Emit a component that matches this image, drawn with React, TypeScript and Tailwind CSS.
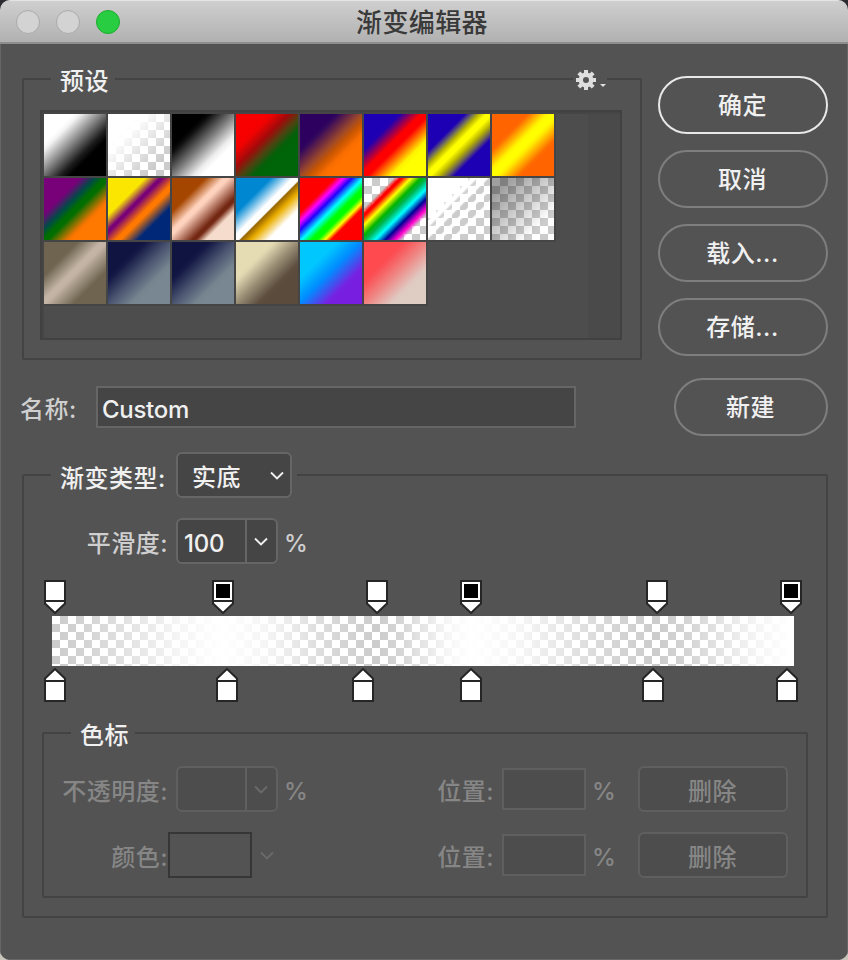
import type { ReactNode } from "react"
import clsx from "clsx"

const CHECKER = "bg-[conic-gradient(#fff_25%,#ccc_0_50%,#fff_0_75%,#ccc_0)] bg-[length:16px_16px] bg-[position:8px_0]"

const PRESETS = [
  "bg-[linear-gradient(135deg,#fff_24%,#f2f2f2_29%,#888_46%,#1c1c1c_63%,#000_71%)]",
  "bg-[linear-gradient(135deg,#fff_26%,#fffffff0_32%,#fff8_52%,#fff2_72%,#fff0_82%)]",
  "bg-[linear-gradient(135deg,#000_26%,#0c0c0c_31%,#777_49%,#ededed_67%,#fff_74%)]",
  "bg-[linear-gradient(135deg,#f80000_25%,#ee0202_30%,#a00a0a_43%,#4a4510_54%,#04600a_63%,#006408_68%)]",
  "bg-[linear-gradient(135deg,#2d005f_27%,#34085c_31%,#a04a28_50%,#c85500_57%,#fa6e00_67%,#ff7200_72%)]",
  "bg-[linear-gradient(135deg,#1e00b4_27%,#2a00a8_30%,#f00_46%,#f00_53%,#fff000_71%,#ff0_76%)]",
  "bg-[linear-gradient(135deg,#1e00b4_30%,#777755_37%,#b9b400_41%,#ff0_47%,#ff0_52%,#b9b400_59%,#6e6455_65%,#1e00b4_71%)]",
  "bg-[linear-gradient(135deg,#ff6400_27%,#ff6c00_30%,#fff400_44%,#ff0_48%,#ff0_52%,#fff000_56%,#ff6c00_71%,#ff6400_75%)]",
  "bg-[linear-gradient(135deg,#780078_28%,#700678_30%,#004b46_41%,#006e00_49%,#006e00_53%,#f47400_69%,#ff7800_72%)]",
  "bg-[linear-gradient(135deg,#fae600_30%,#780078_42%,#780078_44%,#ff7800_56%,#ff7800_60%,#002878_74%)]",
  "bg-[linear-gradient(135deg,#a54600_27%,#ffd2be_42%,#ffd2be_46%,#732814_66%,#732814_69%,#f5dccc_77%)]",
  "bg-[linear-gradient(135deg,#0087d2_28%,#fff_46%,#fff_52%,#966400_53.5%,#ebaf00_62%,#fff_76%)]",
  "bg-[linear-gradient(135deg,#f00_28%,#f0f_35%,#20f_42%,#0ff_51%,#0f0_59%,#0f0_64%,#ff0_70%,#f00_75%)]",
  "bg-[linear-gradient(135deg,#f000_24%,#f00_29%,#f00_31%,#ff0_38%,#00b400_46%,#00b450_51%,#0ff_59%,#009_67%,#f0c_75%,#f0c0_81%)]",
  "bg-[linear-gradient(135deg,#fff_32%,#fff6_33%_34%,#fff_35%_39%,#fff2_41%_43%,#fff_45%_48%,#fff0_50%_55%,#fff_57%_59%,#fff0_61%_67%,#fff_69%_70%,#fff0_72%)]",
  "bg-[linear-gradient(135deg,#00000060_15%,#0003_45%,#0000_78%)]",
  "bg-[linear-gradient(135deg,#6e6450_27%,#c3b4a5_46%,#c3b4a5_51%,#6e6450_74%)]",
  "bg-[linear-gradient(135deg,#0f1441_27%,#131845_31%,#4a5470_50%,#75848f_68%,#788791_74%)]",
  "bg-[linear-gradient(135deg,#0f1441_27%,#131845_31%,#4a5470_50%,#75848f_68%,#788791_74%)]",
  "bg-[linear-gradient(135deg,#e6dcb4_28%,#e0d6b0_32%,#988c74_50%,#5e4f40_67%,#5a4b3c_72%)]",
  "bg-[linear-gradient(135deg,#00c8ff_28%,#00c4ff_31%,#008cff_49%,#7424e2_70%,#781ee1_75%)]",
  "bg-[linear-gradient(135deg,#ff4b50_30%,#fb5055_34%,#ee8c88_53%,#e0c8c0_71%,#dfccc3_76%)]",
]

const OPACITY_STOPS = [
  { x: 55, filled: false },
  { x: 223, filled: true },
  { x: 377, filled: false },
  { x: 471, filled: true },
  { x: 657, filled: false },
  { x: 791, filled: true },
]

const COLOR_STOPS = [55, 227, 363, 471, 653, 787]

function Group({ legend, className, children }: { legend: ReactNode; className?: string; children: ReactNode }) {
  return (
    <section className={clsx("border-2 border-[#434343] rounded-[2px]", className)}>
      {legend}
      {children}
    </section>
  )
}

function Chevron({ className }: { className?: string }) {
  return (
    <svg
      className={clsx("mt-[2px]", className)}
      width="14"
      height="10"
      viewBox="0 0 14 10"
      fill="none"
      stroke="currentColor"
      strokeWidth="1.9"
    >
      <path d="M1 1.5 7 7.5 13 1.5" />
    </svg>
  )
}

function PillButton({ children, primary, className }: { children: ReactNode; primary?: boolean; className?: string }) {
  return (
    <button
      className={clsx(
        "h-[58px] rounded-full border-2 pt-[2px] pr-[1px] text-[#f0f0f0]",
        primary ? "border-[#e8e8e8]" : "border-[#7e7e7e]",
        className
      )}
    >
      {children}
    </button>
  )
}

function NumberSelect({ value, disabled }: { value?: string; disabled?: boolean }) {
  return (
    <div
      className={clsx(
        "flex w-[102px] h-[46px] rounded-[6px] border-2 shrink-0",
        disabled ? "bg-[#4d4d4d] border-[#5f5f5f] text-[#6a6a6a]" : "bg-[#454545] border-[#666] text-[#f0f0f0]"
      )}
    >
      <span className="w-[67px] pl-[6px] pt-px leading-[46px] tracking-[-0.2px]">{value}</span>
      <span
        className={clsx(
          "flex-1 border-l-2 flex items-center justify-center pr-[2px]",
          disabled ? "border-[#5f5f5f]" : "border-[#666]"
        )}
      >
        <Chevron />
      </span>
    </div>
  )
}

function StopMarker({ x, filled, up }: { x: number; filled?: boolean; up?: boolean }) {
  return (
    <svg
      className={clsx("absolute top-0", up && "rotate-180")}
      style={{ left: x - 55 }}
      width="22"
      height="34"
      viewBox="0 0 22 34"
      fill="#fff"
      stroke="#262626"
      strokeWidth="2"
    >
      <path d="M1 1H21V23.5L11 33 1 23.5Z" />
      <path d="M1 21H21" />
      {filled && <rect x="4" y="4" width="14" height="14" fill="#000" stroke="none" />}
    </svg>
  )
}

function StopRow({ label, children }: { label: string; children: ReactNode }) {
  return (
    <div className="flex items-center h-[46px] text-[#868686]">
      <span className="w-[124px] pt-[5px] text-right">{label}</span>
      <div className="w-[259px] flex items-center">{children}</div>
      <span className="w-[67px] pt-[5px] text-right">位置:</span>
      <div className="ml-2 w-[84px] h-[42px] border-2 border-[#5f5f5f] bg-[#4d4d4d]" />
      <span className="ml-[6px] w-[46px] pt-[5px]">%</span>
      <button className="w-[150px] h-[46px] rounded-[6px] border-2 border-[#5f5f5f] bg-[#4d4d4d] pt-[5px] pr-[1px]">删除</button>
    </div>
  )
}

export default function App() {
  return (
    <div className="w-[848px] h-[960px] bg-linear-to-b from-[#2c2c30] to-[#c9c6bd]">
      <div className="w-full h-full overflow-hidden rounded-[10px] bg-[#535353] text-2xl leading-[34px] tracking-[0.5px] font-medium font-['Inter','Noto_Sans_CJK_SC',sans-serif]">
        <header className="h-11 grid grid-cols-[140px_1fr_140px] items-center bg-linear-to-b from-[#cfcfcf] to-[#b1b1b1] border-b-2 border-[#8e8e8e] border-t border-t-[#e4e4e4]">
          <div className="flex gap-4 pl-4">
            <span className="size-6 rounded-full bg-[#d3d3d3] border border-[#aaa]" />
            <span className="size-6 rounded-full bg-[#d3d3d3] border border-[#aaa]" />
            <span className="size-6 rounded-full bg-[#28cd41] border border-[#1dac2b]" />
          </div>
          <h1 className="text-center text-[26px] tracking-[0.4px] text-[#3a3a3a] pt-[3px] pr-1">渐变编辑器</h1>
        </header>

        <main className="h-[916px] border-x border-b border-[#666] pl-[21px] pr-[19px] pt-8">
          <div className="flex justify-between">
            <Group
              className="mt-0.5 w-[620px] h-[282px] px-4"
              legend={
                <div className="-mt-[17px] h-[34px] flex justify-between">
                  <h2 className="ml-[11px] w-16 h-9 pl-[9px] pt-[2px] bg-[#535353] text-[#f0f0f0]">预设</h2>
                  <button className="mr-[17px] w-[34px] pl-[3px] bg-[#535353] text-[#dedede] flex items-start gap-[4px]">
                    <svg className="mt-[7px]" width="20" height="20" viewBox="-10 -10 20 20" fill="none" stroke="currentColor">
                      <circle r="5.2" strokeWidth="4.4" />
                      <path
                        strokeWidth="4"
                        d="M0-10V-6M0 10V6M-10 0H-6M10 0H6M-7.2-7.2-4.5-4.5M7.2 7.2 4.5 4.5M7.2-7.2 4.5-4.5M-7.2 7.2-4.5 4.5"
                      />
                    </svg>
                    <svg className="mt-[21px]" width="6" height="3" viewBox="0 0 6 3" fill="currentColor">
                      <path d="M0 0H6L3 3Z" />
                    </svg>
                  </button>
                </div>
              }
            >
              <div className="mt-[13px] w-[582px] h-[230px] border-2 border-[#414141] bg-[#4d4d4d] flex">
                <div className="w-[546px] border-l-2 border-t-2 border-[#454545]">
                  <div className="grid grid-cols-[repeat(8,64px)] w-[512px]">
                    {PRESETS.map((gradient, i) => (
                      <div key={i} className="size-16 border-r-2 border-b-2 border-[#454545]">
                        <div className={clsx("size-[62px]", CHECKER)}>
                          <div className={clsx("size-full", gradient)} />
                        </div>
                      </div>
                    ))}
                  </div>
                </div>
                <div className="flex-1 bg-[#4a4a4a] border-t-2 border-[#454545]" />
              </div>
            </Group>

            <div className="w-[170px] flex flex-col gap-4">
              <PillButton primary>确定</PillButton>
              <PillButton>取消</PillButton>
              <PillButton>载入...</PillButton>
              <PillButton>存储...</PillButton>
              <PillButton className="mt-[6px] ml-4">新建</PillButton>
            </div>
          </div>

          <div className="-mt-[50px] flex items-center h-[42px] w-[554px] text-[#cfcfcf]">
            <label className="w-[74px] -ml-[2px] mr-[2px] pt-[6px]" htmlFor="name">
              名称:
            </label>
            <input
              id="name"
              defaultValue="Custom"
              className="w-[480px] h-[42px] border-2 border-[#666] bg-[#454545] pl-1 pt-1 text-[#f0f0f0] tracking-[-0.3px] outline-none"
            />
          </div>

          <Group
            className="mt-[46px] w-[806px] h-[444px] pl-[18px]"
            legend={
              <div className="-mt-6 ml-[9px] w-[246px] h-[46px] pl-[9px] bg-[#535353] flex items-center text-[#f0f0f0]">
                <span className="w-[116px] pt-[7px]">渐变类型:</span>
                <div className="w-[116px] h-[46px] rounded-[6px] border-2 border-[#666] bg-[#454545] flex items-center justify-between pl-[14px] pr-[6px]">
                  <span className="pt-[6px]">实底</span>
                  <Chevron />
                </div>
              </div>
            }
          >
            <div className="mt-5 flex items-center h-[46px] text-[#cfcfcf]">
              <span className="w-[126px] text-right mr-2 pt-[6px]">平滑度:</span>
              <NumberSelect value="100" />
              <span className="ml-[6px] pt-[5px]">%</span>
            </div>

            <div className="relative mt-4 ml-[2px] h-[34px]">
              {OPACITY_STOPS.map((stop) => (
                <StopMarker key={stop.x} x={stop.x} filled={stop.filled} />
              ))}
            </div>
            <div className={clsx("mt-[2px] ml-[10px] w-[742px] h-[50px]", CHECKER)}>
              <div className="size-full bg-[linear-gradient(90deg,#fff0_3px,#fff3_42px,#fffc_125px,#fff_171px,#fffc_214px,#fff3_285px,#fff0_325px,#fff3_350px,#fffc_393px,#fff_419px,#fffc_470px,#fff3_558px,#fff0_605px,#fff3_640px,#fffc_704px,#fff_739px)]" />
            </div>
            <div className="relative mt-[2px] ml-[2px] h-[34px]">
              {COLOR_STOPS.map((x) => (
                <StopMarker key={x} x={x} up />
              ))}
            </div>

            <Group
              className="mt-[30px] w-[766px] h-[166px]"
              legend={
                <h2 className="-mt-[17px] ml-[27px] w-16 h-[34px] pl-[9px] pt-[2px] bg-[#535353] text-[#f0f0f0]">色标</h2>
              }
            >
              <div className="mt-[15px] flex flex-col gap-5">
                <StopRow label="不透明度:">
                  <div className="ml-2">
                    <NumberSelect disabled />
                  </div>
                  <span className="ml-[6px] pt-[5px]">%</span>
                </StopRow>
                <StopRow label="颜色:">
                  <div className="w-[84px] h-[46px] border-2 border-[#363636]" />
                  <Chevron className="ml-2 text-[#6a6a6a]" />
                </StopRow>
              </div>
            </Group>
          </Group>
        </main>
      </div>
    </div>
  )
}
